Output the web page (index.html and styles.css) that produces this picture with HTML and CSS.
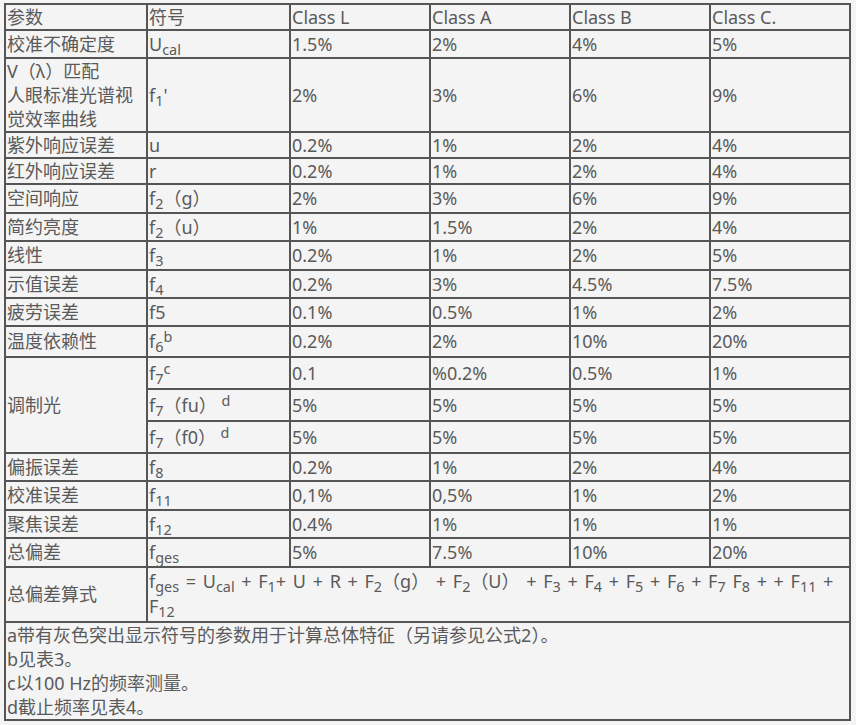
FILE: index.html
```html
<!DOCTYPE html>
<html lang="zh-CN">
<head>
<meta charset="utf-8">
<title>参数表</title>
<link rel="stylesheet" href="styles.css">
</head>
<body>
<table class="spec">
  <colgroup>
    <col class="c1"><col class="c2"><col class="c3"><col class="c4"><col class="c5"><col class="c6">
  </colgroup>
  <tr><td>参数</td><td>符号</td><td>Class L</td><td>Class A</td><td>Class B</td><td>Class C.</td></tr>
  <tr class="h25"><td>校准不确定度</td><td>U<sub>cal</sub></td><td>1.5%</td><td>2%</td><td>4%</td><td>5%</td></tr>
  <tr><td>V（λ）匹配<br>人眼标准光谱视觉效率曲线</td><td>f<sub>1</sub>'</td><td>2%</td><td>3%</td><td>6%</td><td>9%</td></tr>
  <tr><td>紫外响应误差</td><td>u</td><td>0.2%</td><td>1%</td><td>2%</td><td>4%</td></tr>
  <tr><td>红外响应误差</td><td>r</td><td>0.2%</td><td>1%</td><td>2%</td><td>4%</td></tr>
  <tr class="h27"><td>空间响应</td><td>f<sub>2</sub>（g）</td><td>2%</td><td>3%</td><td>6%</td><td>9%</td></tr>
  <tr class="h265"><td>简约亮度</td><td>f<sub>2</sub>（u）</td><td>1%</td><td>1.5%</td><td>2%</td><td>4%</td></tr>
  <tr class="h265"><td>线性</td><td>f<sub>3</sub></td><td>0.2%</td><td>1%</td><td>2%</td><td>5%</td></tr>
  <tr class="h265"><td>示值误差</td><td>f<sub>4</sub></td><td>0.2%</td><td>3%</td><td>4.5%</td><td>7.5%</td></tr>
  <tr class="h255"><td>疲劳误差</td><td>f5</td><td>0.1%</td><td>0.5%</td><td>1%</td><td>2%</td></tr>
  <tr class="h29"><td>温度依赖性</td><td>f<sub>6</sub><sup>b</sup></td><td>0.2%</td><td>2%</td><td>10%</td><td>20%</td></tr>
  <tr class="h30"><td rowspan="3">调制光</td><td>f<sub>7</sub><sup>c</sup></td><td>0.1</td><td>%0.2%</td><td>0.5%</td><td>1%</td></tr>
  <tr class="h30"><td>f<sub>7</sub>（fu） <sup>d</sup></td><td>5%</td><td>5%</td><td>5%</td><td>5%</td></tr>
  <tr class="h30"><td>f<sub>7</sub>（f0） <sup>d</sup></td><td>5%</td><td>5%</td><td>5%</td><td>5%</td></tr>
  <tr class="h26"><td>偏振误差</td><td>f<sub>8</sub></td><td>0.2%</td><td>1%</td><td>2%</td><td>4%</td></tr>
  <tr class="h27"><td>校准误差</td><td>f<sub>11</sub></td><td>0,1%</td><td>0,5%</td><td>1%</td><td>2%</td></tr>
  <tr class="h26"><td>聚焦误差</td><td>f<sub>12</sub></td><td>0.4%</td><td>1%</td><td>1%</td><td>1%</td></tr>
  <tr class="h27"><td>总偏差</td><td>f<sub>ges</sub></td><td>5%</td><td>7.5%</td><td>10%</td><td>20%</td></tr>
  <tr class="h53"><td>总偏差算式</td><td colspan="5" class="formula">f<sub>ges</sub> = U<sub>cal</sub> + F<sub>1</sub>+ U + R + F<sub>2</sub>（g） + F<sub>2</sub>（U） + F<sub>3</sub> + F<sub>4</sub> + F<sub>5</sub> + F<sub>6</sub> + F<sub>7</sub> F<sub>8</sub> + + F<sub>11</sub>&nbsp;+ F<sub>12</sub></td></tr>
  <tr><td colspan="6" class="notes">a带有灰色突出显示符号的参数用于计算总体特征（另请参见公式2）。<br>b见表3。<br>c以100 Hz的频率测量。<br>d截止频率见表4。</td></tr>
</table>
</body>
</html>
```
FILE: styles.css
```css
html, body {
  margin: 0;
  padding: 0;
  background: #f4f4f4;
}
body {
  padding: 3px 0 0 4px;
  font-family: "Noto Sans", "Noto Sans CJK SC", sans-serif;
  font-size: 18px;
  line-height: 24px;
  color: #5a5a5a;
}
.spec {
  border-collapse: collapse;
  table-layout: fixed;
  width: 845px;
  background: #f4f4f4;
}
.c1 { width: 142px; }
.c2 { width: 143px; }
.c3 { width: 140px; }
.c4 { width: 140px; }
.c5 { width: 140px; }
.c6 { width: 140px; }
.spec td {
  border: 2px solid #555;
  padding: 0 1px;
  vertical-align: middle;
  text-align: left;
}
.spec sub, .spec sup {
  font-size: 0.8em;
  line-height: 0;
}
.spec sub {
  vertical-align: -0.3em;
}
.spec sup {
  vertical-align: 0.45em;
}
.h25 td { height: 25.5px; }
.h255 td { height: 25.5px; }
.h26 td { height: 26px; }
.h265 td { height: 26.5px; }
.h27 td { height: 27px; }
.h29 td { height: 29px; }
.h30 td { height: 30px; }
.h53 td { height: 53px; }
.formula {
  padding-right: 4px;
  word-spacing: 2px;
  line-height: 25px;
}
.notes {
  vertical-align: top;
  padding-bottom: 2px;
}
```
